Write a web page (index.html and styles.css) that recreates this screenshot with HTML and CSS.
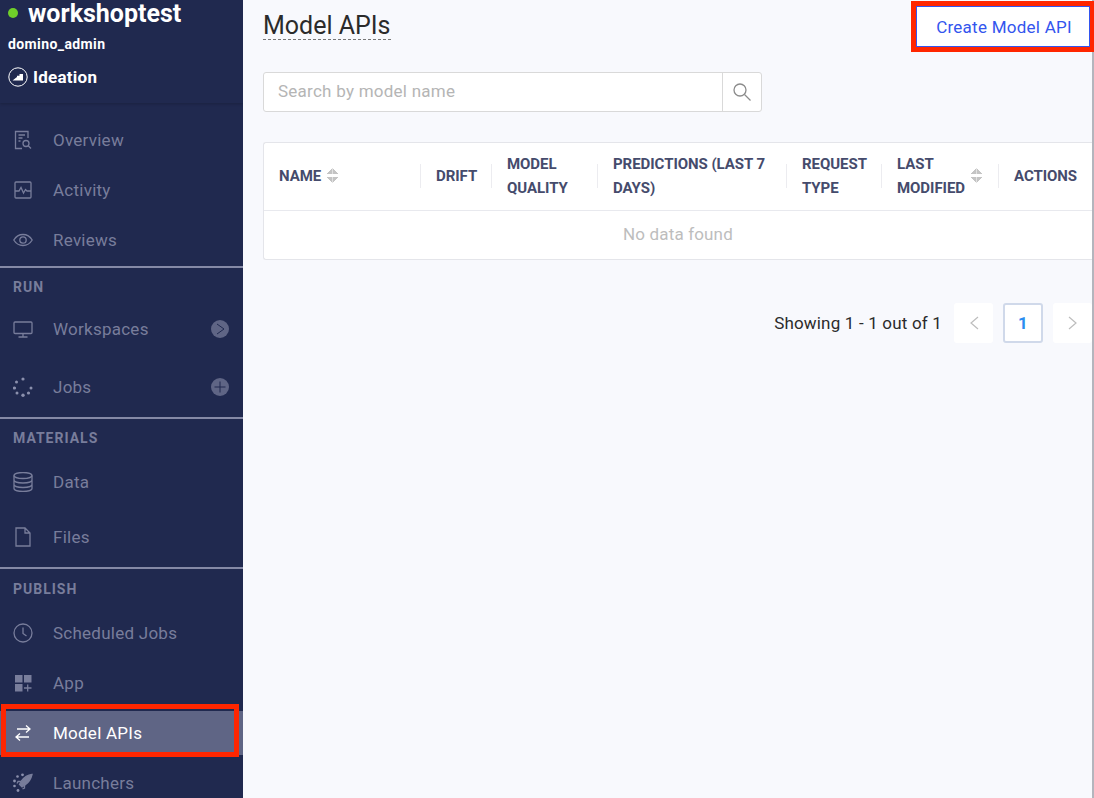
FILE: index.html
```html
<!DOCTYPE html>
<html lang="en">
<head>
  <meta charset="UTF-8">
  <meta name="viewport" content="width=device-width, initial-scale=1">
  <title>Model APIs</title>
  <link rel="stylesheet" href="styles.css">
</head>
<body>
  <div class="app">
    <aside class="sidebar">
      <div class="project">
        <div class="project-name"><span class="status-dot"></span>workshoptest</div>
        <div class="project-owner">domino_admin</div>
        <div class="project-stage">
          <svg width="20" height="20" viewBox="0 0 20 20"><circle cx="10" cy="10" r="9.2" fill="none" stroke="#fff" stroke-width="1"/><path d="M4.5 13.5 L9 10 L9 8.8 L11.5 8.8 L11.5 7 L15 7 L15 13.5 Z" fill="#fff"/></svg>
          Ideation
        </div>
      </div>

      <nav class="group group-first">
        <a class="nav-row">
          <svg class="nav-icon" viewBox="0 0 20 20"><path d="M15 8V1.5H2.5V18.5H9M5.5 5H12M5.5 8H9.5M5.5 11H7.5"/><circle cx="13" cy="13.5" r="3"/><path d="M15.2 15.7L18 18.5"/></svg>
          Overview
        </a>
        <a class="nav-row">
          <svg class="nav-icon" viewBox="0 0 20 20"><rect x="2" y="2" width="16" height="16" rx="1"/><path d="M2 11H6L8 7.5L10.5 13L12.5 9.5L14 11H18"/></svg>
          Activity
        </a>
        <a class="nav-row">
          <svg class="nav-icon" viewBox="0 0 20 20"><path d="M.8 10C3 6.300 6.200 4.500 10 4.500S17 6.300 19.200 10C17 13.700 13.800 15.500 10 15.500S3 13.700.8 10Z"/><circle cx="10" cy="10" r="3.200"/></svg>
          Reviews
        </a>
      </nav>

      <nav class="group group-run">
        <div class="group-label">RUN</div>
        <a class="nav-row row-tall">
          <svg class="nav-icon" viewBox="0 0 20 20"><rect x="1" y="3" width="18" height="11.500" rx="1"/><path d="M10 14.500V18M5.500 18H14.500"/></svg>
          Workspaces
          <span class="nav-action"><svg width="18" height="18" viewBox="0 0 18 18"><path d="M6 4L13 9L6 14" fill="none" stroke="#20294f" stroke-width="1"/></svg></span>
        </a>
        <a class="nav-row row-tall">
          <svg class="nav-icon" viewBox="0 0 20 20"><g fill="#8b90ad" stroke="none"><circle cx="10" cy="2" r="1.600"/><circle cx="3.500" cy="5" r="1.500"/><circle cx="1.500" cy="11" r="1.600"/><circle cx="4" cy="16" r="1.500"/><circle cx="10" cy="18.300" r="1.700"/><circle cx="15.500" cy="16" r="1.600"/><circle cx="18" cy="11" r="1.500"/></g></svg>
          Jobs
          <span class="nav-action"><svg width="18" height="18" viewBox="0 0 18 18"><path d="M9 3.500V14.500M3.500 9H14.500" fill="none" stroke="#20294f" stroke-width="1"/></svg></span>
        </a>
      </nav>

      <nav class="group group-materials">
        <div class="group-label">MATERIALS</div>
        <a class="nav-row row-mid">
          <svg class="nav-icon" viewBox="0 0 20 20"><ellipse cx="10" cy="3.500" rx="9" ry="3"/><path d="M1 3.500V16.500C1 18.200 5 19.500 10 19.500S19 18.200 19 16.500V3.500M1 8C1 9.700 5 11 10 11S19 9.700 19 8M1 12.500C1 14.200 5 15.500 10 15.500S19 14.200 19 12.500"/></svg>
          Data
        </a>
        <a class="nav-row row-mid">
          <svg class="nav-icon" viewBox="0 0 20 20"><path d="M3 1H12L17 6V19H3ZM12 1V6H17"/></svg>
          Files
        </a>
      </nav>

      <nav class="group group-publish">
        <div class="group-label">PUBLISH</div>
        <a class="nav-row">
          <svg class="nav-icon" viewBox="0 0 20 20"><circle cx="10" cy="10" r="9"/><path d="M10 4.500V10.500L13.500 13"/></svg>
          Scheduled Jobs
        </a>
        <a class="nav-row">
          <svg class="nav-icon" viewBox="0 0 20 20"><g fill="#787d9b" stroke="none"><rect x="2" y="2" width="7.500" height="7.500"/><rect x="11" y="2" width="7.500" height="7.500"/><rect x="2" y="11" width="7.500" height="7.500"/></g><path d="M14.700 11.500V18.500M11 15H18.500"/></svg>
          App
        </a>
        <a class="nav-row row-active">
          <svg class="nav-icon" viewBox="0 0 20 20"><path d="M4 6H17M13 2.500L17 6L13 9.500M16 14H3M7 10.500L3 14L7 17.500"/></svg>
          Model APIs
        </a>
        <a class="nav-row">
          <svg class="nav-icon" viewBox="0 0 20 20"><path d="M19 1.500C14 2 11 4.500 8.500 8L6.500 11.500L9 14L12 12C15.500 9.500 18 6 19 1.500Z" fill="#787d9b"/><path d="M8 8.500H5L4 10.500M11.500 12V15L9.500 16" /><g fill="#8b90ad" stroke="none"><circle cx="9.500" cy="1.800" r="1.400"/><circle cx="4.500" cy="3.500" r="1.300"/><circle cx="1.500" cy="8" r="1.400"/><circle cx="1.500" cy="13" r="1.300"/><circle cx="5" cy="17.500" r="1.400"/></g></svg>
          Launchers
        </a>
      </nav>
    </aside>

    <main class="content">
      <div class="page-head">
        <h1 class="page-title">Model APIs</h1>
        <button class="create-btn">Create Model API</button>
      </div>

      <div class="search">
        <input type="text" class="search-input" placeholder="Search by model name">
        <button class="search-btn">
          <svg width="20" height="20" viewBox="0 0 20 20" fill="none" stroke="#8b8b8b" stroke-width="1.300"><circle cx="8" cy="8" r="6"/><path d="M12.500 12.500L18.500 18.500"/></svg>
        </button>
      </div>

      <div class="table">
        <div class="table-head">
          <div class="th th-name">NAME <span class="sort"></span></div>
          <div class="th">DRIFT</div>
          <div class="th">MODEL QUALITY</div>
          <div class="th">PREDICTIONS (LAST 7 DAYS)</div>
          <div class="th">REQUEST TYPE</div>
          <div class="th th-modified"><span>LAST MODIFIED</span><span class="sort"></span></div>
          <div class="th">ACTIONS</div>
        </div>
        <div class="table-empty">No data found</div>
      </div>

      <div class="pager">
        <span class="pager-text">Showing 1 - 1 out of 1</span>
        <a class="page-btn page-prev">
          <svg width="12" height="16" viewBox="0 0 12 16" fill="none" stroke="#bdbdbd" stroke-width="1.200"><path d="M10 2L3 8L10 14"/></svg>
        </a>
        <a class="page-btn page-current">1</a>
        <a class="page-btn page-next">
          <svg width="12" height="16" viewBox="0 0 12 16" fill="none" stroke="#bdbdbd" stroke-width="1.200"><path d="M2 2L9 8L2 14"/></svg>
        </a>
      </div>
    </main>
  </div>
</body>
</html>
```

FILE: styles.css
```css
:root {
  --navy: #20294f;
  --nav-text: #787d9b;
  --line: #8589a6;
  --bg: #f8f9fd;
  --blue: #3355ee;
  --red: #ff2600;
  --th: #454b6c;
}

*, *::before, *::after {
  box-sizing: border-box;
}

html, body {
  height: 100%;
}

body {
  margin: 0;
  font-family: Roboto, sans-serif;
  background: var(--bg);
  overflow: hidden;
}

.app {
  display: flex;
  height: 798px;
}

/* sidebar */
.sidebar {
  width: 243px;
  flex: none;
  height: 798px;
  background: var(--navy);
  overflow: hidden;
}

.project {
  height: 103px;
  color: #fff;
  font-weight: 700;
  box-shadow: 0 1px 3px rgba(0, 0, 0, 0.2);
}

.project-name {
  display: flex;
  align-items: center;
  height: 26px;
  padding-left: 8px;
  font-size: 25px;
}

.status-dot {
  width: 10px;
  height: 10px;
  margin-right: 10px;
  border-radius: 50%;
  background: #6fcf2a;
}

.project-owner {
  margin-top: 9px;
  padding-left: 8px;
  font-size: 14px;
  line-height: 18px;
  letter-spacing: 0.4px;
}

.project-stage {
  display: flex;
  align-items: center;
  gap: 5px;
  margin-top: 14px;
  padding-left: 8px;
  font-size: 17px;
  line-height: 20px;
  letter-spacing: 0.25px;
}

.group-first {
  padding-top: 12px;
}

.group-run,
.group-materials,
.group-publish {
  border-top: 2px solid var(--line);
}

.group-run { margin-top: 1px; }
.group-materials { margin-top: 1px; }
.group-publish { margin-top: 3px; }

.group-label {
  padding-top: 9px;
  color: var(--nav-text);
  font-size: 14px;
  font-weight: 700;
  line-height: 20px;
  letter-spacing: 1px;
  padding-left: 13px;
  height: 32px;
}

.group-materials .group-label { height: 35px; }
.group-publish .group-label { height: 39px; padding-top: 10px; }

.nav-row {
  position: relative;
  display: flex;
  align-items: center;
  height: 50px;
  padding-left: 13px;
  color: var(--nav-text);
  font-size: 17px;
  letter-spacing: 0.25px;
}

.row-tall { height: 58px; }
.row-mid { height: 55px; }

.nav-icon {
  width: 20px;
  height: 20px;
  margin-right: 20px;
  flex: none;
  fill: none;
  stroke: var(--nav-text);
  stroke-width: 1.300;
}

.nav-action {
  display: flex;
  align-items: center;
  justify-content: center;
  width: 18px;
  height: 18px;
  margin-left: auto;
  margin-right: 14px;
  border-radius: 50%;
  background: #5f6585;
}

.row-active {
  color: #fff;
  background: #5f6585;
  background-clip: padding-box;
  border-top: 3px solid transparent;
  border-bottom: 3px solid transparent;
}

.row-active .nav-icon {
  stroke: #fff;
}

/* red annotation box */
.row-active::after {
  content: "";
  position: absolute;
  left: 1px;
  top: -7px;
  width: 238px;
  height: 53px;
  border: 5px solid var(--red);
}

/* main */
.content {
  flex: 1;
  min-width: 0;
  height: 798px;
  padding: 6px 0 0 20px;
  border-right: 2px solid #b4b5bd;
}

.page-head {
  display: flex;
  justify-content: space-between;
  align-items: flex-start;
  height: 66px;
}

.page-title {
  margin: 0;
  padding-top: 6px;
  color: #2b2b2b;
  font-size: 25px;
  font-weight: 400;
  line-height: 27px;
  border-bottom: 1px dashed #777;
}

.create-btn {
  width: 174px;
  height: 41px;
  margin-right: 2px;
  padding: 0 0 0 2px;
  border: 1px solid var(--blue);
  outline: 5px solid var(--red);
  background: #fff;
  color: var(--blue);
  font-family: inherit;
  font-size: 17px;
  letter-spacing: 0.25px;
}

.search {
  display: flex;
  width: 499px;
  height: 40px;
  background: #fff;
  border: 1px solid #d9d9d9;
  border-radius: 3px;
}

.search-input {
  flex: 1;
  min-width: 0;
  padding: 0 14px 2px;
  border: none;
  outline: none;
  background: transparent;
  font-family: inherit;
  font-size: 17px;
  letter-spacing: 0.25px;
}

.search-input::placeholder {
  color: #b5b5b5;
}

.search-btn {
  display: flex;
  align-items: center;
  justify-content: center;
  width: 39px;
  padding: 0;
  border: none;
  border-left: 1px solid #d9d9d9;
  background: transparent;
}

.table {
  margin-top: 30px;
  background: #fff;
  border: 1px solid #e4e5ea;
  border-right: none;
  border-radius: 3px 0 0 3px;
}

.table-head {
  display: grid;
  grid-template-columns: 156px 71px 106px 189px 95px 117px 94px;
  height: 68px;
  padding-bottom: 2px;
  border-bottom: 1px solid #e8e9ee;
}

.th {
  display: flex;
  align-items: center;
  padding: 0 15px 0 16px;
  color: var(--th);
  font-size: 15px;
  font-weight: 700;
  line-height: 24px;
  letter-spacing: -0.05px;
  background: linear-gradient(#ececf0, #ececf0) left center / 1px 24px no-repeat;
}

.th-name {
  padding-left: 15px;
  background: none;
}

.th-modified {
  padding-right: 16px;
}

.sort {
  flex: none;
  width: 11px;
  height: 15px;
  margin-left: 6px;
  background:
    linear-gradient(to top left, #c4c4c4 50%, transparent 50%) left top / 50% 6px no-repeat,
    linear-gradient(to top right, #c4c4c4 50%, transparent 50%) right top / 50% 6px no-repeat,
    linear-gradient(to bottom left, #c4c4c4 50%, transparent 50%) left bottom / 50% 6px no-repeat,
    linear-gradient(to bottom right, #c4c4c4 50%, transparent 50%) right bottom / 50% 6px no-repeat;
}

.table-empty {
  height: 48px;
  color: #bdbdbd;
  font-size: 17px;
  line-height: 46px;
  letter-spacing: 0.15px;
  text-align: center;
}

.pager {
  display: flex;
  align-items: center;
  justify-content: flex-end;
  gap: 10px;
  margin-top: 43px;
}

.pager-text {
  margin-right: 2px;
  color: #2b2b2b;
  font-size: 17px;
  letter-spacing: 0.18px;
}

.page-btn {
  display: flex;
  align-items: center;
  justify-content: center;
  width: 40px;
  height: 40px;
  border-radius: 3px;
  background: #fff;
}

.page-current {
  border: 2px solid #d0d9ea;
  color: #2b8cf0;
  font-size: 17px;
  font-weight: 700;
}

.page-prev,
.page-next {
  width: 39px;
}
```
